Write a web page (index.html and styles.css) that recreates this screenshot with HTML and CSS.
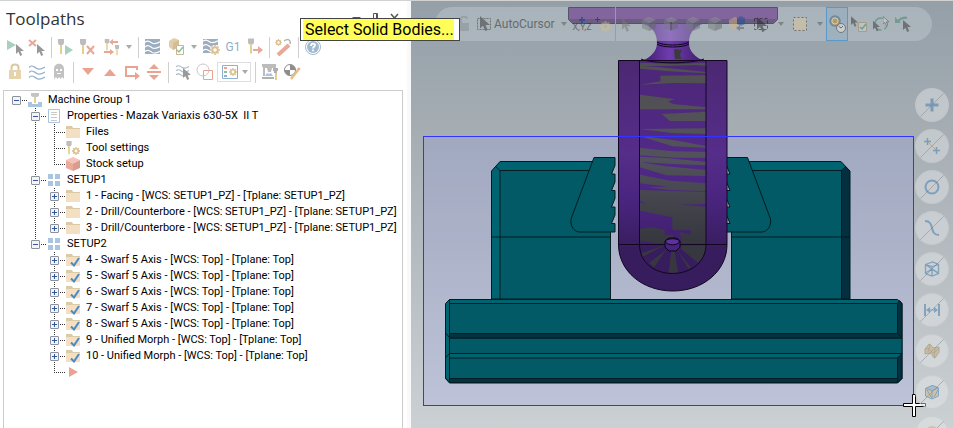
FILE: index.html
```
<!DOCTYPE html>
<html lang="en">
<head>
    <meta charset="UTF-8">
    <meta name="viewport" content="width=device-width, initial-scale=1.0">
    <title>Toolpaths</title>
    <link rel="stylesheet" href="styles.css">
</head>
<body>
    <svg class="defs" aria-hidden="true">
        <symbol id="cursor" viewBox="0 0 8 12"><path d="M0 0v10l2.4-2.2L4.2 12l2-.9-1.8-4H8z"/></symbol>
        <symbol id="tool" viewBox="0 0 8 16"><path fill="#bdbdbd" d="M1 0h6v4l-1 2H2L1 4z"/><path fill="#e6cf8a" d="M3 6h2v9H3z"/></symbol>
        <symbol id="gear" viewBox="0 0 10 10"><circle cx="5" cy="5" r="2.8" fill="none" stroke="#dcbf8c" stroke-width="2"/><path stroke="#dcbf8c" stroke-width="1.6" stroke-dasharray="1.3 7.4" d="M5 0v10M0 5h10M1.5 1.5l7 7M8.500 1.500l-7 7"/></symbol>
        <symbol id="folder" viewBox="0 0 14 14"><path fill="#dcc9a6" d="M0 1h6l1 2h7v3H0z"/><path fill="#f3dfc2" d="M0 4h14v9H0z"/></symbol>
        <symbol id="folder-ok" viewBox="0 0 14 14"><path fill="#dcc9a6" d="M0 1h6l1 2h7v3H0z"/><path fill="#f3dfc2" d="M0 4h14v9H0z"/><path fill="none" stroke="#4d89c4" stroke-width="2" d="M5 9.500l3 3L13 5"/></symbol>
        <symbol id="grid" viewBox="0 0 14 14"><path fill="#a9c5e1" d="M1 1h5v5H1zM8 1h5v5H8zM1 8h5v5H1zM8 8h5v5H8z"/></symbol>
        <symbol id="waves" viewBox="0 0 16 16"><path fill="none" stroke-width="1.300" d="M0 3.500c3-3 5-1 7 .5s5 1.500 9-1M0 8.500c3-3 5-1 7 .5s5 1.500 9-1M0 13.500c3-3 5-1 7 .5s5 1.500 9-1"/></symbol>
        <symbol id="cube" viewBox="0 0 14 14"><path fill="#8f9499" d="M7 0l7 3-7 3.500L0 3z"/><path fill="#767b80" d="M0 3l7 3.500V14l-7-3z"/><path fill="#63686d" d="M14 3L7 6.500V14l7-3z"/></symbol>
    </svg>

    <aside class="panel">
        <header class="panel-head">
            <h1>Toolpaths</h1>
            <div class="window-buttons">
                <button aria-label="Options"><svg width="9" height="10"><path fill="#555" d="M0 4h9L4.500 8z"/></svg></button>
                <button aria-label="Pin"><svg width="9" height="10"><path fill="none" stroke="#555" d="M2.500 6V.5h4V6M0 6.500h9M5.500 1v5M4.500 7v3"/></svg></button>
                <button aria-label="Close"><svg width="9" height="10"><path stroke="#555" stroke-width="1.500" d="M1 1l7 8M8 1L1 9"/></svg></button>
            </div>
        </header>

        <div class="toolbar">
            <button aria-label="Select all operations"><svg width="18" height="18"><path fill="#a9cfbd" d="M1 2l9 5-9 5z"/><use href="#cursor" x="10" y="6" width="8" height="12" fill="#999"/></svg></button>
            <button aria-label="Clear selection"><svg width="18" height="18"><path stroke="#e9a798" stroke-width="2" d="M1 2l7 6M8 2L1 8"/><use href="#cursor" x="9" y="6" width="8" height="12" fill="#999"/></svg></button>
            <span class="sep"></span>
            <button aria-label="Regenerate selected"><svg width="18" height="18"><use href="#tool" x="0" y="1" width="8" height="16"/><path fill="#a9cfbd" d="M8 7l8 5-8 5z"/></svg></button>
            <button aria-label="Clear dirty"><svg width="18" height="18"><use href="#tool" x="0" y="1" width="8" height="16"/><path stroke="#e9a798" stroke-width="2" d="M8 8l7 8M15 8l-7 8"/></svg></button>
            <button class="split" aria-label="Transform tool"><svg width="18" height="18"><use href="#tool" x="1" y="1" width="6" height="12"/><use href="#tool" x="11" y="7" width="6" height="11"/><path fill="#e9a798" d="M15 3v2H10v2L6 4l4-3v2zM1 13v2h6v2l4-3-4-3v2z"/></svg><i class="caret"></i></button>
            <span class="sep"></span>
            <button aria-label="Backplot"><svg width="18" height="18"><path fill="#9badbf" d="M1 1h15v15H1z"/><use href="#waves" x="1" y="1" width="15" height="15" stroke="#fff"/></svg></button>
            <button class="split" aria-label="Verify"><svg width="18" height="18"><path fill="#e2cda9" d="M1 3l5-3 5 2v7l-6 3-4-3z"/><path fill="#d3bd98" d="M5 5l6-3v7l-6 3z"/><path fill="#fff" stroke="#c9b58f" d="M8.500 7.500h7v9h-7z"/><path fill="none" stroke="#86bfa5" stroke-width="1.500" d="M9 12l2 2 4-5"/></svg><i class="caret"></i></button>
            <button aria-label="Simulate options"><svg width="18" height="18"><path fill="#9badbf" d="M1 1h15v14H1z"/><use href="#waves" x="1" y="0" width="15" height="15" stroke="#fff"/><circle cx="13" cy="12" r="5" fill="#fff"/><use href="#gear" x="8" y="7" width="10" height="10"/></svg></button>
            <button class="g1">G1</button>
            <button aria-label="Feed"><svg width="18" height="18"><use href="#tool" x="1" y="0" width="8" height="17"/><path fill="#e9a798" d="M7 11h5V8l5 4-5 4v-3H7z"/></svg></button>
            <span class="sep"></span>
            <button aria-label="Wizard"><svg width="18" height="18"><path stroke="#e9a798" stroke-width="4" d="M3 17L14 7"/><path fill="none" stroke="#b5b5b5" stroke-width="1.500" d="M9 3c4-3 7-1 6 3"/><use href="#gear" x="0" y="1" width="7" height="7"/></svg></button>
            <span class="sep"></span>
            <button aria-label="Help"><svg width="18" height="18"><circle cx="9" cy="9" r="7.500" fill="#fff" stroke="#a0bad2"/><circle cx="9" cy="9" r="6" fill="#a0bad2"/><path fill="none" stroke="#fff" stroke-width="1.800" d="M7 8c0-3 4-3 4-.8C11 8.500 9 8.500 9 10.500M9 11.500v1.800"/></svg></button>
        </div>

        <div class="toolbar second">
            <button aria-label="Lock"><svg width="18" height="18"><path fill="none" stroke="#dac8a2" stroke-width="2" d="M5.500 8V4.500c0-4 7-4 7 0V8"/><path fill="#e6d3ac" d="M3 7h12v9H3z"/><path fill="#fff" d="M8 9h2v4H8z"/></svg></button>
            <button aria-label="Toggle toolpath display"><svg width="18" height="18"><use href="#waves" x="1" y="1" width="16" height="16" stroke="#92b0cb"/></svg></button>
            <button aria-label="Ghost"><svg width="18" height="18"><path fill="#c2c2c2" d="M4 16V6c0-7 10-7 10 0v10l-2-2-1.500 2L9 14l-1.500 2L6 14z"/><path fill="#fff" d="M6 6h2v2H6zM10 6h2v2h-2zM7 10h4v1H7z"/></svg></button>
            <span class="sep"></span>
            <button aria-label="Move down"><svg width="18" height="18"><path fill="#eba391" d="M3 5h12l-6 7z"/></svg></button>
            <button aria-label="Move up"><svg width="18" height="18"><path fill="#eba391" d="M3 13h12L9 6z"/></svg></button>
            <button aria-label="Insert position"><svg width="18" height="18"><path fill="none" stroke="#eba391" stroke-width="2" d="M14 7V4H3v9h9"/><path fill="#eba391" d="M12 9l5 4-5 4z"/></svg></button>
            <button aria-label="Scroll to insert"><svg width="18" height="18"><path fill="#eba391" d="M2 8h14v2H2zM9 1l5 5H4zM9 17l5-5H4z"/></svg></button>
            <span class="sep"></span>
            <button aria-label="Only display selected"><svg width="18" height="18"><use href="#waves" x="1" y="1" width="15" height="13" stroke="#a9b9c6"/><use href="#cursor" x="9" y="5" width="8" height="12" fill="#999"/></svg></button>
            <button aria-label="Associated geometry"><svg width="18" height="18"><circle cx="7" cy="7" r="6" fill="none" stroke="#c8c8c8"/><path fill="none" stroke="#eba391" d="M7.500 7.500h9v9h-9z"/></svg></button>
            <button class="split boxed" aria-label="Display options"><svg width="18" height="18"><path fill="#fff" stroke="#8fb0d0" d="M1.500 2.500h15v13h-15z"/><path fill="#eba391" d="M3 4h3v2H3z"/><path fill="#86bfa5" d="M3 8h3v2H3z"/><path fill="#8fb0d0" d="M3 12h3v2H3z"/><use href="#gear" x="8" y="5" width="8" height="8"/></svg><i class="caret"></i></button>
            <span class="sep"></span>
            <button aria-label="Machine"><svg width="18" height="18"><path fill="#bcbcbc" d="M1 1h14v4h-4l-1 4H7L6 5H4v8H2V4L1 4z"/><path fill="#a9c5e1" d="M4 13l2-3 2 1 2-1 2 3z"/><path fill="#b0b0b0" d="M1 14h12v2H1zM12 5h5v3h-1v2h-3V8h-1z"/><path fill="#e6cf8a" d="M14 10h2v7h-2z"/></svg></button>
            <button aria-label="Edit origin"><svg width="18" height="18"><circle cx="7" cy="7" r="5.500" fill="#fff" stroke="#8d8d8d"/><path fill="#8d8d8d" d="M7 7V1.500A5.500 5.500 0 0 1 12.500 7zM7 7v5.500A5.500 5.500 0 0 1 1.500 7z"/><path stroke="#e3c07d" stroke-width="2.500" d="M8 16l7-9"/><path stroke="#eba391" stroke-width="2.500" d="M15 7l1.500-2"/></svg></button>
        </div>

        <nav class="tree" aria-label="Operations">
            <ul>
                <li>
                    <div class="row"><button class="toggle" aria-label="Collapse"></button><svg class="icon" viewBox="0 0 14 14"><path fill="#a9c5e1" d="M0 9h4v2h6V9h4v5H0z"/><path fill="#c4c4c4" d="M3 0h8v3l-2 1H5L3 3z"/><path fill="#e6cf8a" d="M6 4h2v6H6z"/></svg>Machine Group 1</div>
                    <ul>
                        <li>
                            <div class="row"><button class="toggle" aria-label="Collapse"></button><svg class="icon" viewBox="0 0 14 14"><path fill="#fff" stroke="#a9c5e1" d="M1.500.5h11v13h-11z"/><path fill="none" stroke="#c9c9c9" d="M4 3.500h6M4 5.500h6M4 8.500h6M4 11.500h6"/></svg>Properties - Mazak Variaxis 630-5X&nbsp; II T</div>
                            <ul>
                                <li><div class="row"><span class="leaf"></span><svg class="icon"><use href="#folder"/></svg>Files</div></li>
                                <li><div class="row"><span class="leaf"></span><svg class="icon"><use href="#tool" x="-1" y="0" width="8" height="14"/><use href="#gear" x="6" y="6" width="8" height="8"/></svg>Tool settings</div></li>
                                <li><div class="row"><span class="leaf"></span><svg class="icon" viewBox="0 0 14 14"><path fill="#f5c3b8" d="M7 0l7 3-7 3.500L0 3z"/><path fill="#eca99b" d="M0 3l7 3.500V14l-7-3z"/><path fill="#d99c90" d="M14 3L7 6.500V14l7-3z"/></svg>Stock setup</div></li>
                            </ul>
                        </li>
                        <li>
                            <div class="row"><button class="toggle" aria-label="Collapse"></button><svg class="icon"><use href="#grid"/></svg>SETUP1</div>
                            <ul>
                                <li><div class="row"><button class="toggle closed" aria-label="Expand"></button><svg class="icon"><use href="#folder"/></svg>1 - Facing - [WCS: SETUP1_PZ] - [Tplane: SETUP1_PZ]</div></li>
                                <li><div class="row"><button class="toggle closed" aria-label="Expand"></button><svg class="icon"><use href="#folder"/></svg>2 - Drill/Counterbore - [WCS: SETUP1_PZ] - [Tplane: SETUP1_PZ]</div></li>
                                <li><div class="row"><button class="toggle closed" aria-label="Expand"></button><svg class="icon"><use href="#folder"/></svg>3 - Drill/Counterbore - [WCS: SETUP1_PZ] - [Tplane: SETUP1_PZ]</div></li>
                            </ul>
                        </li>
                        <li>
                            <div class="row"><button class="toggle" aria-label="Collapse"></button><svg class="icon"><use href="#grid"/></svg>SETUP2</div>
                            <ul>
                                <li><div class="row"><button class="toggle closed" aria-label="Expand"></button><svg class="icon"><use href="#folder-ok"/></svg>4 - Swarf 5 Axis - [WCS: Top] - [Tplane: Top]</div></li>
                                <li><div class="row"><button class="toggle closed" aria-label="Expand"></button><svg class="icon"><use href="#folder-ok"/></svg>5 - Swarf 5 Axis - [WCS: Top] - [Tplane: Top]</div></li>
                                <li><div class="row"><button class="toggle closed" aria-label="Expand"></button><svg class="icon"><use href="#folder-ok"/></svg>6 - Swarf 5 Axis - [WCS: Top] - [Tplane: Top]</div></li>
                                <li><div class="row"><button class="toggle closed" aria-label="Expand"></button><svg class="icon"><use href="#folder-ok"/></svg>7 - Swarf 5 Axis - [WCS: Top] - [Tplane: Top]</div></li>
                                <li><div class="row"><button class="toggle closed" aria-label="Expand"></button><svg class="icon"><use href="#folder-ok"/></svg>8 - Swarf 5 Axis - [WCS: Top] - [Tplane: Top]</div></li>
                                <li><div class="row"><button class="toggle closed" aria-label="Expand"></button><svg class="icon"><use href="#folder-ok"/></svg>9 - Unified Morph - [WCS: Top] - [Tplane: Top]</div></li>
                                <li><div class="row"><button class="toggle closed" aria-label="Expand"></button><svg class="icon"><use href="#folder-ok"/></svg>10 - Unified Morph - [WCS: Top] - [Tplane: Top]</div></li>
                                <li><div class="row"><span class="leaf"></span><svg class="icon"><path fill="#eba391" d="M3 2l9 5-9 5z"/></svg></div></li>
                            </ul>
                        </li>
                    </ul>
                </li>
            </ul>
        </nav>
    </aside>

    <main class="viewport">
        <svg class="scene" viewBox="411 0 542 428" preserveAspectRatio="xMidYMid slice" role="img" aria-label="Part in vise">
            <defs>
                <linearGradient id="sky" x1="0" y1="0" x2="0" y2="1"><stop offset="0" stop-color="#949fa8"/><stop offset=".3" stop-color="#a5adb3"/><stop offset="1" stop-color="#cbd0d3"/></linearGradient>
                <linearGradient id="arm" x1="0" y1="0" x2="0" y2="1"><stop offset="0" stop-color="#4c2872"/><stop offset=".4" stop-color="#552d8a"/><stop offset=".6" stop-color="#4a2580"/><stop offset=".82" stop-color="#371d5d"/><stop offset="1" stop-color="#371d5d"/></linearGradient>
                <linearGradient id="neck"><stop offset="0" stop-color="#3b1a68"/><stop offset=".45" stop-color="#6f3cae"/><stop offset="1" stop-color="#3b1a68"/></linearGradient>
                <linearGradient id="patch" gradientUnits="userSpaceOnUse" x1="0" y1="60" x2="0" y2="660"><stop offset="0" stop-color="#505050"/><stop offset=".5" stop-color="#52525c"/><stop offset=".9" stop-color="#37373f"/></linearGradient>
            </defs>
            <rect x="411" width="542" height="428" fill="url(#sky)"/>
            <rect x="423" y="136" width="491" height="269" fill="#8791fa" fill-opacity=".17"/>

            <!-- fixed jaws -->
            <g stroke="#011c22" stroke-width="1">
                <path fill="#006470" d="M491.500 299V171l8.500-9.500h110.500V299z"/>
                <path fill="#025a66" d="M500 299V170.500h110.500V299z"/>
                <path fill="#006470" d="M731.500 299V161.500H841l8.500 9V299z"/>
                <path fill="#025a66" d="M731.500 299V170.500H841.500V299z"/>
                <path fill="#032f3f" d="M841.500 299V170.500l4-4 4.500 4.500v128z"/>
                <path fill="none" d="M491.500 237H611M731 237h119M495.500 166.500l4.500 4"/>
            </g>
            <!-- jaw inserts with teeth -->
            <g id="insert" fill="#025a66" stroke="#011c22" stroke-width="1">
                <path d="M594 157.500h21v8l-3.500 8.500h3.500v8l-3.500 8.500h3.500v8l-3.500 8.500h3.500v8l-3.500 8.500h3.500v8.500H580c-6 0-10-6-9-13z"/>
            </g>
            <use href="#insert" transform="matrix(-1 0 0 1 1341.500 0)"/>
            <!-- base -->
            <g stroke="#011c22" stroke-width="1">
                <path fill="#006470" d="M445.500 303.500l4-4h448l4.500 4v75l-4.500 4.500h-448l-4-4.500z"/>
                <path fill="#025a66" d="M449.500 303.500h448v30h-448zM449.500 338H902v15.500H449.500zM449.500 358h448v20.500h-448z"/>
                <path fill="#03333f" d="M449.500 333.500h448l4.500 4.500H449.500zM449.500 378.500h448v4h-448z"/>
                <path fill="#032f3f" d="M897.500 303.500l2-3 2.500 3V338l-4.500-4.500zM897.500 358l4.500-4.500v25l-4.500 4.500z"/>
                <path fill="none" d="M449.500 299.500v83M445.500 333l4 4.500M445.500 358l4-4.500M445.500 378l4 4.500"/>
            </g>

            <!-- spindle and arm -->
            <path fill="url(#neck)" d="M640 23c10 2 17 8 17 20 0 8-6 14-15 18h62c-9-4-15-10-15-18 0-12 7-18 17-20z"/>
            <path fill="#58297a" stroke="#1b0a2c" d="M568.500 7.500h209v12l-4 4h-201l-4-4z"/>
            <path fill="#371c4e" d="M569 19h208l-4 4H573z"/>
            <path fill="#3b3b3b" d="M674 49l8 1-2 4 1 5h-6z"/>
            <path fill="none" stroke="#0c0418" d="M657 42c5 4 26 4 32 0M657 44c5 4 26 4 32 0"/>
            <path fill="url(#arm)" stroke="#120620" d="M618.500 60.500H727V244.500C727 271 703 291 672.750 291S618.500 271 618.500 244.500z"/>
            <path fill="#4e2680" fill-opacity=".35" d="M640 61h66v183h-66z"/>
            <g transform="translate(590 40) scale(.333333)" fill="url(#patch)">
                <path d="M150 68l110 4 90-4v10l-30-3-80 2-90 2zM150 78l60 4 138 14v4l-110-6-88-8zM211 107l137-1v24l-98-1-100 5 62-10zM150 164l104 14-20 6 14 8 100 10v6H150zM215 222l133-7v28h-108zM150 267l198-2v17l-100-3z"/>
                <path d="M150 288l100 12 98 18v5l-100-4zM150 324l100 10 98 2v17l-90 0-108-7zM150 350l80 4 118 12v10l-100-4-98-6zM150 366l70 12 128 12v18l-118-2-80-24zM150 404l90 18 108 8v24l-110-4-64-8 60-2-84-10z"/>
                <path d="M150 450l198 6v36l-80 2 80 6v112l-66-28 20-1v-12l-55-1v-38l-97-20v-24l20 4-20-10zM150 566l40-4 34 8v14l25 2v24h-48l-51-8zM270 575l78 24v12H275z"/>
                <path d="M154 640l70-24-66 34zM178 668l50-38-36 52zM236 698l8-64h10l10 64zM262 632l40 50-6 4zM274 616h74c-2 26-10 40-24 52l-50-40z"/>
            </g>
            <g fill="none" stroke="#120620">
                <path d="M639.500 60.500V244.500c0 18 15 29 33 29s33.500-11 33.500-29V60.500M618.500 244.500H727"/>
                <path d="M641 59c12 5 50 5 63 0"/>
            </g>
            <path fill="#482381" stroke="#0c0418" d="M665 241l4-3h7l4 3v6l-4 4h-7l-4-4z"/>
            <path fill="#5d31a0" stroke="#0c0418" d="M665.500 241c2-3 12-3 14 0 0 5-14 5-14 0z"/>

            <rect x="423.500" y="136.500" width="490" height="269" fill="none" stroke="#3333ff"/>
            <path fill="#fff" stroke="#000" d="M912.500 394.500h3v9h10v3h-10v10h-3v-10h-9v-3h9z"/>
        </svg>

        <div class="selection-bar">
            <button aria-label="Unlock"><svg width="18" height="18"><path fill="none" stroke="#878f96" stroke-width="2" d="M8 8V4c0-3 6-3 6 0"/><path fill="#878f96" d="M4 8h12v8H4z"/></svg></button>
            <button class="auto-cursor"><svg width="18" height="18"><path fill="none" stroke="#333" stroke-dasharray="2 1" d="M2.500 3.500h13v11h-13z"/><use href="#cursor" x="5" y="1" width="10" height="15" fill="#333"/></svg>AutoCursor<i class="caret"></i></button>
            <button class="xyz" aria-label="Fast point"><svg width="18" height="7"><path stroke="#0a3c9c" stroke-width="2" d="M6 4h6M9 1v6"/></svg>X,Y,Z</button>
            <button aria-label="Cursor settings"><svg width="18" height="18"><path stroke="#222" d="M0 4.500h5M2.500 2v5"/><use href="#gear" x="5" y="6" width="11" height="11"/></svg></button>
            <span class="sep"></span>
            <button aria-label="Select"><svg width="18" height="18"><use href="#cursor" x="4" y="3" width="9" height="14" fill="#777"/></svg></button>
            <button aria-label="Select body"><svg width="18" height="18"><use href="#cube" x="2" y="2" width="14" height="14"/></svg></button>
            <button aria-label="Select face"><svg width="18" height="18"><use href="#cube" x="2" y="2" width="14" height="14"/><path stroke="#444" stroke-width="2" d="M9 7v8"/></svg></button>
            <button aria-label="Select edge"><svg width="18" height="18"><use href="#cube" x="2" y="2" width="14" height="14"/></svg></button>
            <button aria-label="Select feature"><svg width="18" height="18"><use href="#cube" x="2" y="2" width="14" height="14"/></svg></button>
            <button aria-label="Select from back"><svg width="18" height="18"><path fill="#d4b483" d="M1 5l6-3 4 2v8l-5 3-5-3z"/><path fill="#1f4f9a" d="M9 3l4-2 4 2v6l-4 2-4-2z"/><path fill="#556" d="M8 13l4-3v2h4v2h-4v2z"/></svg></button>
            <button class="split" aria-label="Window selection"><svg width="18" height="18"><path fill="none" stroke="#111" stroke-dasharray="3 2" d="M2.500 3.500h13v11h-13z"/><use href="#cursor" x="5" y="2" width="10" height="15" fill="#222"/></svg><i class="caret"></i></button>
            <button class="split" aria-label="Selection area"><svg width="18" height="18"><path fill="#dcc79a" stroke="#333" stroke-dasharray="2 2" d="M2.500 2.500h13v13h-13z"/></svg><i class="caret"></i></button>
            <button class="active" aria-label="Verify selection"><svg width="18" height="20"><circle cx="7" cy="7" r="5" fill="#b58e44" stroke="#46749a" stroke-width="1.500"/><circle cx="7" cy="7" r="3" fill="none" stroke="#e8d7ae"/><circle cx="13" cy="14" r="4.500" fill="#ddd" stroke="#555"/><path fill="none" stroke="#444" d="M10.500 12l2.500 2 2-2"/></svg></button>
            <button aria-label="Validate"><svg width="18" height="18"><use href="#cursor" x="1" y="1" width="7" height="11" fill="#333"/><path fill="#ccd3d6" stroke="#a58a55" d="M8.500 7.500h8v9h-8z"/><path fill="none" stroke="#338866" stroke-width="1.500" d="M10 12l2 2 4-5"/></svg></button>
            <button aria-label="Invert selection"><svg width="18" height="18"><path fill="none" stroke="#3f8168" stroke-width="1.500" stroke-dasharray="8 3" d="M9 3a6 6 0 1 0 .1 0"/><use href="#cursor" x="1" y="5" width="7" height="12" fill="#333"/><use href="#cursor" x="11" y="1" width="6" height="10" fill="#ddd" stroke="#333"/></svg></button>
            <button aria-label="Select last"><svg width="18" height="18"><path fill="none" stroke="#3f8168" stroke-width="2" d="M13 3C10 2 7 3 4 6"/><path fill="#3f8168" d="M1 2v6h6z"/><use href="#cursor" x="9" y="5" width="8" height="12" fill="#333"/></svg></button>
        </div>

        <div class="quick-masks">
            <button aria-label="Points"><svg width="20" height="20"><path stroke="#3873a5" stroke-width="3" d="M3.500 10h13M10 3.500v13"/></svg></button>
            <button aria-label="Lines"><svg width="20" height="20"><path stroke="#b08f56" d="M6 6l9 9"/><path stroke="#3873a5" stroke-width="1.500" d="M2 5.500h7M5.500 2v7M11 14.500h7M14.500 11v7"/></svg></button>
            <button aria-label="Arcs"><svg width="20" height="20"><circle cx="10" cy="10" r="6.500" fill="none" stroke="#3873a5" stroke-width="2"/></svg></button>
            <button aria-label="Splines"><svg width="20" height="20"><path fill="none" stroke="#3873a5" stroke-width="2" d="M3 3c5 0 6 3 7 7s2 7 7 7"/></svg></button>
            <button aria-label="Wireframe"><svg width="20" height="20"><path fill="none" stroke="#3873a5" stroke-width="1.300" d="M3.500 5.500l7-2.500 6 2.500v9L10 17l-6.500-2.500zM3.500 5.500l6.500 2 6.500-2M10 7.500V17M3.500 14l6.500-4 6.500 4M3.500 5.500L16.500 14.500"/></svg></button>
            <button aria-label="Dimensions"><svg width="20" height="20"><path stroke="#3873a5" stroke-width="2" d="M3 4v12M17 4v12"/><path fill="#3873a5" d="M4 10l4-3v2.500h4V7l4 3-4 3v-2.500H8V13z"/></svg></button>
            <button aria-label="Surfaces"><svg width="20" height="20"><path fill="#c3a468" stroke="#8f7a52" d="M3 8l4-5c3 0 2 4 5 4l5-1v5l-4 6c-3 0-2-5-5-5l-5 1z"/><path fill="none" stroke="#8f7a52" d="M3 8c4-1 5 0 6 2s3 3 8-3M8 4l-2 7M13 8l-1 8"/></svg></button>
            <button aria-label="Solids"><svg width="20" height="20"><path fill="#c8ab72" stroke="#3873a5" d="M3.500 6.500l7-3 6 2.500v8L10 17l-6.500-3z"/><path fill="#7fa3c0" stroke="#3873a5" d="M3.500 6.500l7-3 6 2.500-6.500 2.500z"/><path fill="none" stroke="#3873a5" d="M10 8.500V17M5 8l4 7M12 15l4-7"/></svg></button>
            <button aria-label="Meshes"><svg width="20" height="20"><circle cx="10" cy="10" r="7" fill="#c8ab72"/></svg></button>
        </div>
    </main>

    <div class="prompt" role="status"><span>Select Solid Bodies...</span></div>
</body>
</html>
```
FILE: styles.css
```
* {
    box-sizing: border-box;
}
body {
    margin: 0;
    display: flex;
    height: 100vh;
    overflow: hidden;
    position: relative;
    border-top: 1px solid #d2d2d2;
    background: #f9f9f9;
    font-family: Roboto, "Open Sans", sans-serif;
    color: #000;
}
.defs {
    position: absolute;
    width: 0;
    height: 0;
}
button {
    padding: 0;
    border: 0;
    background: none;
    font: inherit;
    color: inherit;
    cursor: pointer;
    display: flex;
    align-items: center;
    justify-content: center;
}
svg {
    display: block;
    flex: none;
}

/* left panel */
.panel {
    flex: none;
    display: flex;
    flex-direction: column;
    width: 407px;
    margin-right: 4px;
    padding: 6px 4px 0 3px;
    background: #fff;
}
.panel-head {
    display: flex;
    justify-content: space-between;
    align-items: flex-start;
    height: 29px;
    padding: 0 4px 0 3px;
}
h1 {
    margin: 0;
    font-family: "Open Sans", sans-serif;
    font-size: 17px;
    font-weight: 400;
    line-height: 24px;
    color: #333;
}
.window-buttons {
    display: flex;
    gap: 10px;
    padding-top: 6px;
}
.toolbar {
    display: flex;
    align-items: center;
    height: 22px;
    padding-left: 1px;
}
.toolbar.second {
    margin: 3px 0 7px;
}
.toolbar button {
    width: 22px;
    height: 20px;
}
.toolbar .g1 {
    font-size: 12px;
    color: #8fadc9;
}
.toolbar .split {
    width: 36px;
    gap: 5px;
}
.toolbar .boxed {
    width: 34px;
    gap: 3px;
    margin: 0 1px;
    border: 1px solid #dedede;
}
.sep {
    width: 1px;
    height: 21px;
    margin: 0 3px;
    background: #cfcfcf;
}
.caret {
    border: 3px solid transparent;
    border-top: 4px solid #aaa;
    border-bottom: 0;
}

/* operations tree */
.tree {
    flex: 1;
    overflow: hidden;
    padding: 1px 0 0 8px;
    border: 1px solid #ccc;
    border-bottom: 0;
    font-size: 11px;
    line-height: 16px;
    white-space: nowrap;
}
.tree ul {
    margin: 0;
    padding: 0;
    list-style: none;
}
.tree ul ul {
    margin-left: 19px;
}
.tree ul ul li {
    background: repeating-linear-gradient(#333 0 1px, transparent 1px 2px) 4px 0 / 1px 100% no-repeat;
}
.tree ul ul li:last-child {
    background-size: 1px 8px;
}
.row {
    display: flex;
    align-items: center;
    height: 16px;
    background: repeating-linear-gradient(90deg, #333 0 1px, transparent 1px 2px) 4px 8px / 12px 1px no-repeat;
}
.leaf,
.toggle {
    flex: none;
    width: 9px;
    height: 9px;
}
.toggle {
    border: 1px solid #8d929a;
    border-radius: 1px;
    background: linear-gradient(#2f55a4, #2f55a4) center / 5px 1px no-repeat #f4f4f4;
}
.toggle.closed {
    background: linear-gradient(#2f55a4, #2f55a4) center / 5px 1px no-repeat,
        linear-gradient(#2f55a4, #2f55a4) center / 1px 5px no-repeat #f4f4f4;
}
.icon {
    width: 14px;
    height: 14px;
    margin: 0 6px 0 7px;
}

/* graphics window */
.viewport {
    flex: 1;
    position: relative;
    overflow: hidden;
}
.scene {
    position: absolute;
    top: -1px;
    width: 100%;
    height: 100vh;
}
.selection-bar {
    position: absolute;
    top: 6px;
    left: 24px;
    right: 21px;
    height: 34px;
    display: flex;
    align-items: center;
    padding-left: 16px;
    border-radius: 17px;
    background: rgba(205, 215, 222, 0.35);
    color: #222;
}
.selection-bar button {
    flex: none;
    width: 22px;
    height: 34px;
    opacity: 0.5;
}
.selection-bar .auto-cursor {
    width: 98px;
    gap: 1px;
    justify-content: flex-start;
    padding-left: 2px;
    font-size: 12px;
}
.selection-bar .auto-cursor .caret {
    margin-left: 5px;
}
.selection-bar .caret {
    border-top-color: #555;
}
.selection-bar .split {
    width: 39px;
    gap: 8px;
}
.selection-bar .sep {
    height: 34px;
    margin: 0;
    background: #959ea6;
}
.selection-bar .xyz {
    flex-direction: column;
    font-size: 9px;
    line-height: 9px;
}
.selection-bar .active {
    border: 1px solid #2f8ad0;
    background: rgba(90, 160, 210, 0.25);
    opacity: 0.65;
}
.quick-masks {
    position: absolute;
    top: 87px;
    right: 4px;
    display: flex;
    flex-direction: column;
    gap: 7px;
}
.quick-masks button {
    width: 34px;
    height: 34px;
    border-radius: 50%;
    border: 1px solid rgba(190, 195, 198, 0.5);
    background: linear-gradient(135deg, transparent 49%, rgba(140, 145, 150, 0.6) 49% 51%, transparent 51%),
        rgba(230, 232, 235, 0.45);
}
.quick-masks svg {
    opacity: 0.5;
}

/* prompt floats over both panes */
.prompt {
    position: absolute;
    top: 17px;
    left: 300px;
    padding: 0 5px 0 2px;
    border: 1px solid #444;
    background: #fff;
    font-size: 16px;
    line-height: 21px;
}
.prompt span {
    display: block;
    padding-left: 2px;
    background: #ffff57;
}
```
